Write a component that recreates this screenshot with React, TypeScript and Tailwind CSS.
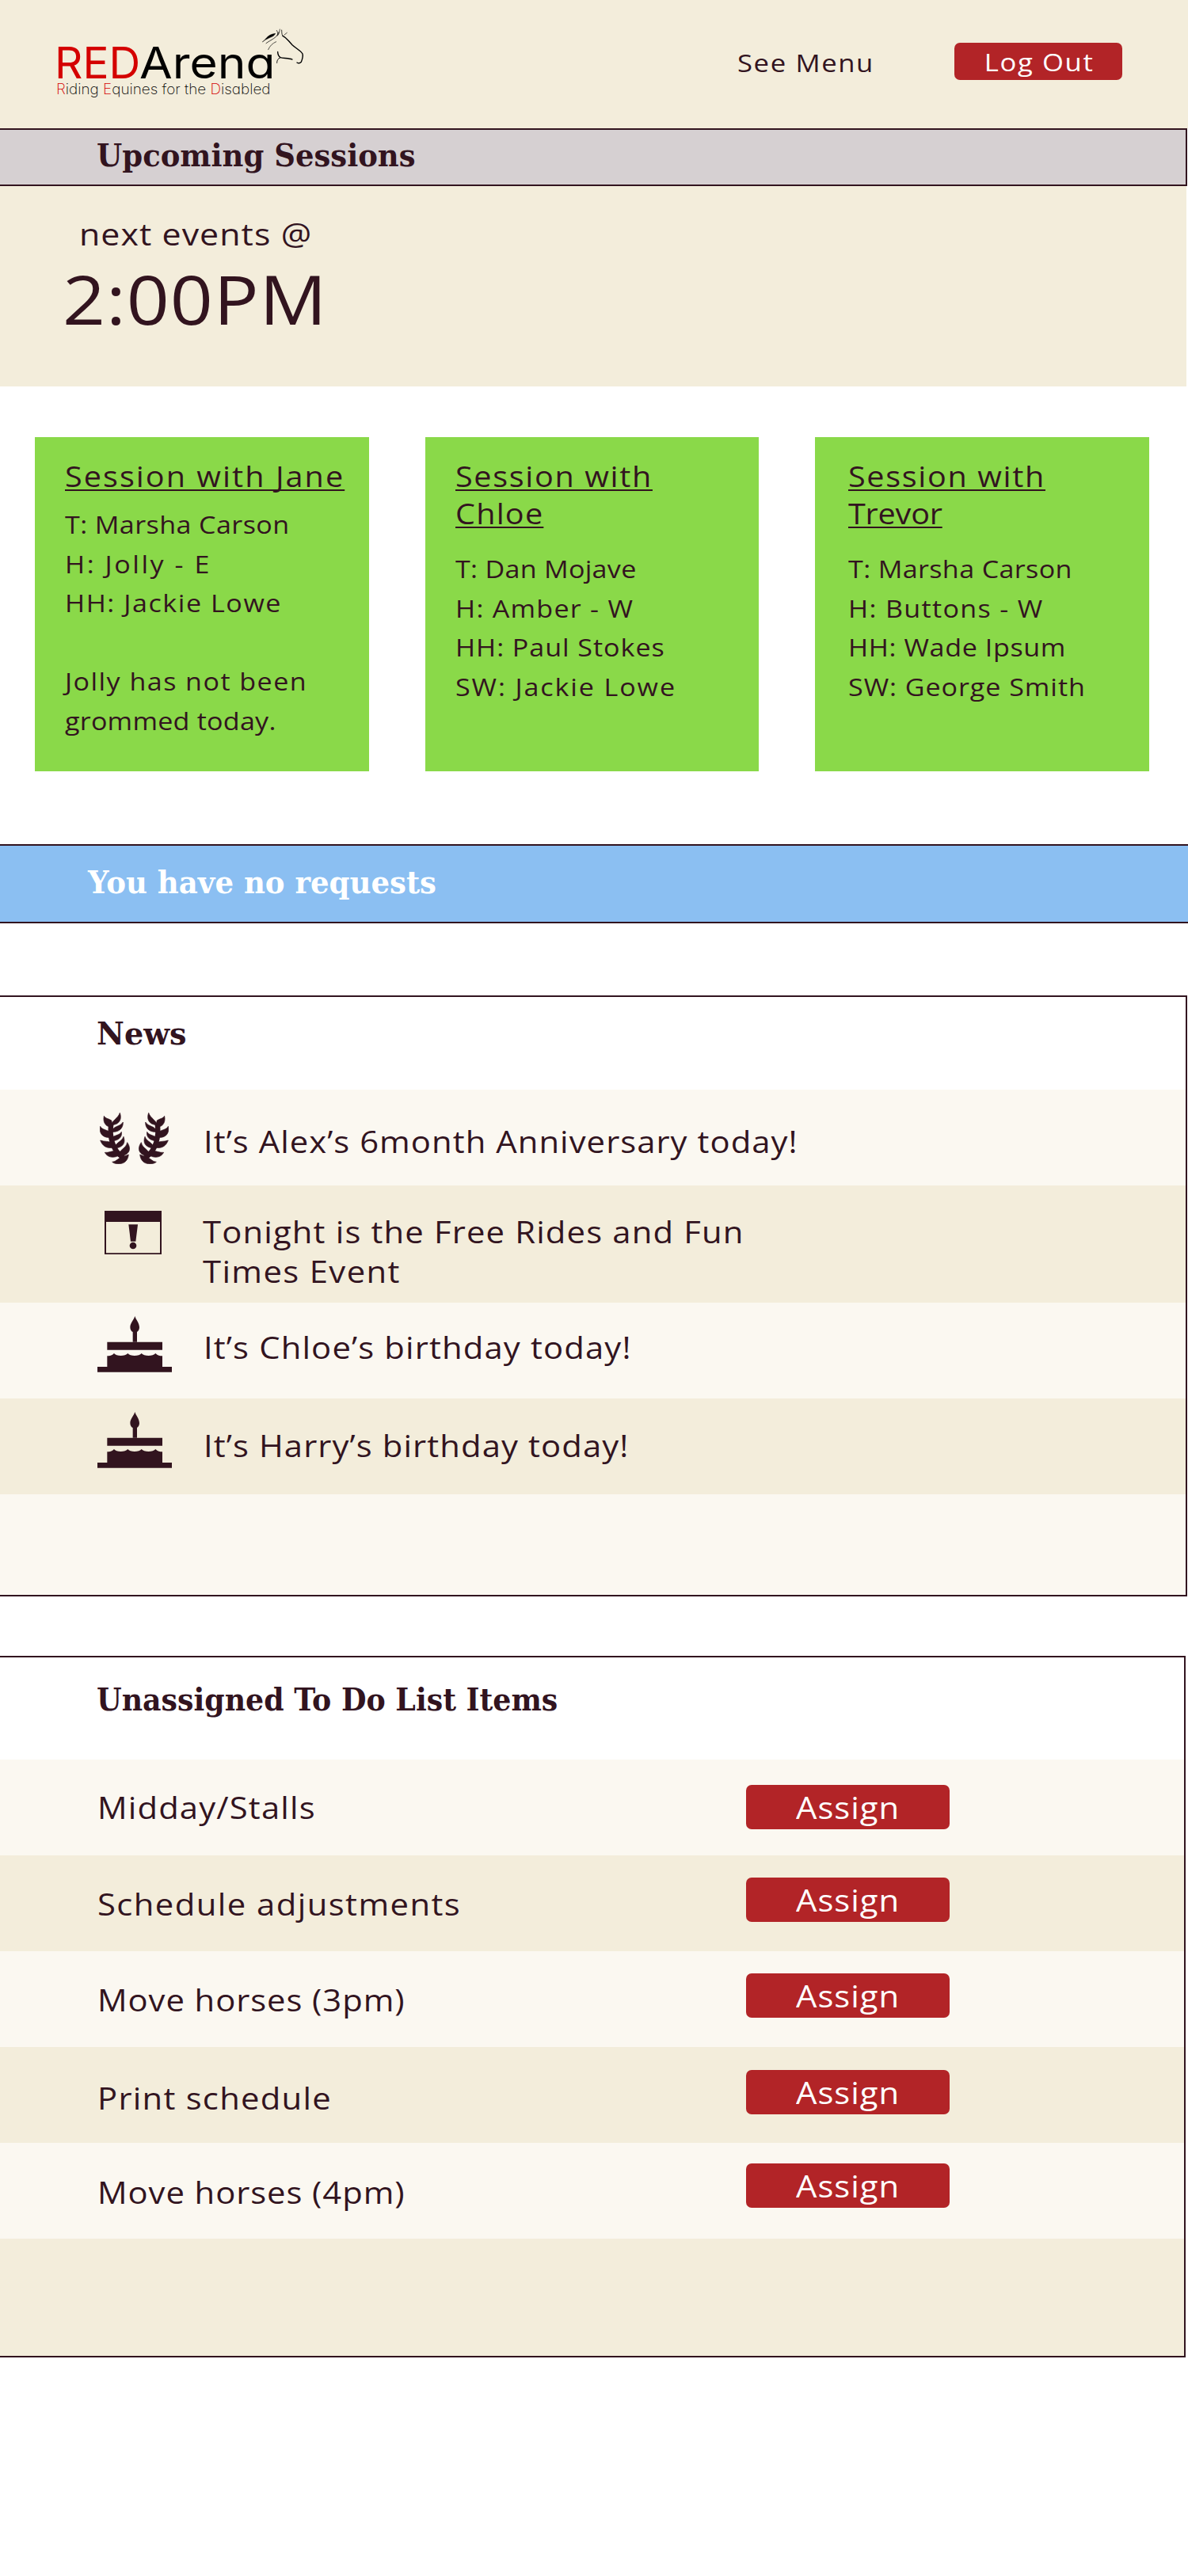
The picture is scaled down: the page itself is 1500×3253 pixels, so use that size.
import type { ReactNode } from "react";

/** Widened body text that keeps a single line. */
function Body({ className = "", children }: { className?: string; children: ReactNode }) {
  return (
    <span className={`block w-fit origin-left scale-x-110 whitespace-nowrap ${className}`}>{children}</span>
  );
}

function Heading({ className = "", children }: { className?: string; children: ReactNode }) {
  return (
    <h2
      className={`w-fit origin-left whitespace-nowrap font-['DejaVu_Serif',serif] text-[40px] font-bold leading-[40px] ${className}`}
    >
      {children}
    </h2>
  );
}

function HorseHead() {
  return (
    <svg
      viewBox="840 45 165 140"
      className="absolute left-[330px] top-[35px] h-[46.7px] w-[55px]"
      fill="none"
      stroke="#000"
      strokeWidth="3"
      strokeLinecap="round"
    >
      <path d="M845 98C855 94 862 70 893 67C886 82 868 80 845 98Z" fill="#000" strokeWidth="1.5" />
      <path d="M858 104C876 90 900 84 906 62" strokeWidth="2.2" />
      <path d="M866 128C872 114 882 104 896 98" strokeWidth="2" />
      <path d="M898 55C903 62 903 69 900 76" strokeWidth="2" />
      <path d="M910 51C909 60 907 66 904 72" strokeWidth="2" />
      <path d="M917 54C918 62 916 69 921 76" strokeWidth="2.4" />
      <path d="M937 64L927 72" strokeWidth="2" />
      <path d="M921 76C935 82 942 95 957 110C972 124 990 132 996 144C999 154 995 165 991 175C986 180 980 180 975 177" strokeWidth="4.2" />
      <path d="M902 136C902 148 906 154 912 158C925 161 945 160 957 165" strokeWidth="4" />
      <path d="M912 158C902 162 899 170 899 178" strokeWidth="3" />
    </svg>
  );
}

function Logo() {
  return (
    <div className="w-[930.5px] pl-[69px] pt-[59px] font-['Inter',sans-serif] [font-feature-settings:'cv11'_1]">
      <HorseHead />
      <div className="flex text-[55px] font-normal leading-[40px]">
        <span className="w-[107px] text-[#d40000]">RED</span>
        <span className="origin-left scale-x-[1.1] text-black">Arena</span>
      </div>
      <p className="ml-[2px] mt-[4px] w-fit origin-left scale-x-[1.05] whitespace-nowrap text-[18px] font-extralight leading-[20px] text-black">
        <span className="text-[#d40000]">R</span>iding <span className="text-[#d40000]">E</span>quines for the{" "}
        <span className="text-[#d40000]">D</span>isabled
      </p>
    </div>
  );
}

function Branch() {
  return (
    <g stroke="#32141f" strokeWidth="2">
      <path d="M122 112C112 165 127 222 168 246" fill="none" strokeWidth="19" />
      <path d="M94 88C98 98 115 98 123 106L124 130C104 131 88 115 94 88Z" />
      <path d="M154 76C162 97 155 120 124 122C122 105 147 98 154 76Z" />
      <path d="M166 111C167 134 152 150 122 148C128 124 155 130 166 111Z" />
      <path d="M80 127C85 140 107 140 118 150L122 168C95 174 73 158 80 127Z" />
      <path d="M160 148C164 170 146 184 118 182C122 158 150 166 160 148Z" />
      <path d="M80 180C95 186 112 182 128 190L132 206C106 214 88 202 80 180Z" />
      <path d="M168 166C177 190 166 208 134 210C138 186 160 188 168 166Z" />
      <path d="M97 226C112 228 125 219 142 220L150 238C130 248 108 246 97 226Z" />
      <path d="M182 188C199 212 192 238 150 240C148 215 178 212 182 188Z" />
      <path d="M125 262C140 262 148 246 162 244L187 234C184 262 165 270 148 269C138 269 130 267 125 262Z" />
    </g>
  );
}

function WreathIcon() {
  return (
    <svg viewBox="78 75 261 195" className="ml-[126px] mt-[29px] h-[65px] w-[87px]" fill="#32141f">
      <Branch />
      <g transform="translate(417 0) scale(-1 1)">
        <Branch />
      </g>
    </svg>
  );
}

function EventIcon() {
  return (
    <svg viewBox="96 447 216 166" className="ml-[132px] mt-[32px] h-[55.4px] w-[72px]" fill="#32141f">
      <path d="M96 447H312V613H96ZM102 489V607H306V489Z" fillRule="evenodd" />
      <path d="M187 499H222L214 563H195Z" />
      <circle cx="204" cy="579" r="13" />
    </svg>
  );
}

function CakeIcon() {
  return (
    <svg viewBox="69 845 282 212" className="ml-[123px] mt-[17px] h-[70.7px] w-[94px]" fill="#32141f">
      <path d="M211 845C214 858 228 870 228 888C228 896 224 902 219 905V943H203V905C197 902 193 896 193 886C194 870 208 858 211 845Z" />
      <path d="M106 943H315V973H106Z" />
      <path d="M106 1037V996C115 996 125 994 132 986C140 998 175 998 184 986C192 998 228 998 236 986C245 998 280 998 289 986C297 994 306 996 315 996V1037H351V1057H69V1037Z" />
    </svg>
  );
}

type Line = { text: string; tracking: string };

const cards: { pad: string; gap: string; title: Line[]; lines: Line[] }[] = [
  {
    pad: "pl-[38px]",
    gap: "mt-[13px]",
    title: [{ text: "Session with Jane", tracking: "tracking-[1.85px]" }],
    lines: [
      { text: "T: Marsha Carson", tracking: "tracking-[0.36px]" },
      { text: "H: Jolly - E", tracking: "tracking-[2.3px]" },
      { text: "HH: Jackie Lowe", tracking: "tracking-[1.4px]" },
      { text: "\u00a0", tracking: "" },
      { text: "Jolly has not been", tracking: "tracking-[1.3px]" },
      { text: "grommed today.", tracking: "tracking-[0.2px]" },
    ],
  },
  {
    pad: "pl-[38.5px]",
    gap: "mt-[22px]",
    title: [
      { text: "Session with", tracking: "tracking-[1.5px]" },
      { text: "Chloe", tracking: "tracking-[1.1px]" },
    ],
    lines: [
      { text: "T: Dan Mojave", tracking: "tracking-[0.25px]" },
      { text: "H: Amber - W", tracking: "tracking-[1.13px]" },
      { text: "HH: Paul Stokes", tracking: "tracking-[0.85px]" },
      { text: "SW: Jackie Lowe", tracking: "tracking-[1.7px]" },
    ],
  },
  {
    pad: "pl-[41.5px]",
    gap: "mt-[22px]",
    title: [
      { text: "Session with", tracking: "tracking-[1.5px]" },
      { text: "Trevor", tracking: "tracking-[-0.2px]" },
    ],
    lines: [
      { text: "T: Marsha Carson", tracking: "tracking-[0.32px]" },
      { text: "H: Buttons - W", tracking: "tracking-[1.2px]" },
      { text: "HH: Wade Ipsum", tracking: "tracking-[0.55px]" },
      { text: "SW: George Smith", tracking: "tracking-[0.85px]" },
    ],
  },
];

const news: { icon: ReactNode; row: string; pad: string; lines: Line[] }[] = [
  {
    icon: <WreathIcon />,
    row: "h-[121px] bg-[#fbf8f1]",
    pad: "pt-[40px]",
    lines: [{ text: "It’s Alex’s 6month Anniversary today!", tracking: "tracking-[0.95px]" }],
  },
  {
    icon: <EventIcon />,
    row: "h-[148px] bg-[#f3eddb]",
    pad: "-ml-[1px] pt-[33px]",
    lines: [
      { text: "Tonight is the Free Rides and Fun", tracking: "tracking-[1.05px]" },
      { text: "Times Event", tracking: "tracking-[1.25px]" },
    ],
  },
  {
    icon: <CakeIcon />,
    row: "h-[121px] bg-[#fbf8f1]",
    pad: "pt-[31px]",
    lines: [{ text: "It’s Chloe’s birthday today!", tracking: "tracking-[1.04px]" }],
  },
  {
    icon: <CakeIcon />,
    row: "h-[121px] bg-[#f3eddb]",
    pad: "pt-[34px]",
    lines: [{ text: "It’s Harry’s birthday today!", tracking: "tracking-[1px]" }],
  },
];

const todos = [
  { text: "Midday/Stalls", tracking: "tracking-[1.04px]", row: "bg-[#fbf8f1]", pad: "pt-[35px]", button: "mt-[32px]" },
  { text: "Schedule adjustments", tracking: "tracking-[1.3px]", row: "bg-[#f3eddb]", pad: "pt-[36px]", button: "mt-[28px]" },
  { text: "Move horses (3pm)", tracking: "tracking-[0.84px]", row: "bg-[#fbf8f1]", pad: "pt-[36px]", button: "mt-[28px]" },
  { text: "Print schedule", tracking: "tracking-[1.14px]", row: "bg-[#f3eddb]", pad: "pt-[39px]", button: "mt-[29px]" },
  { text: "Move horses (4pm)", tracking: "tracking-[0.84px]", row: "bg-[#fbf8f1]", pad: "pt-[37px]", button: "mt-[26px]" },
];

export default function App() {
  return (
    <div className="relative h-[3253px] w-[1500px] overflow-hidden bg-white font-['Open_Sans',sans-serif] text-[#32141f]">
      <header className="flex h-[162px] bg-[#f3eddb] text-[31.5px]">
        <Logo />
        <nav className="w-[274px] pt-[59px] leading-[40px]">
          <Body className="tracking-[1.47px]">See Menu</Body>
        </nav>
        <button className="mt-[54px] h-[47px] w-[212px] rounded-[7px] bg-[#b22427] leading-[47px] text-white">
          <span className="inline-block scale-x-110 pl-[2px] tracking-[1.46px]">Log Out</span>
        </button>
      </header>

      <div className="h-[73px] w-[1499px] border-y-2 border-r-2 border-[#32141f] bg-[#d6d0d2] pl-[122px] pt-[12px]">
        <Heading className="scale-x-[0.925]">Upcoming Sessions</Heading>
      </div>

      <section className="h-[253px] w-[1498px] bg-[#f3eddb] pt-[40px]">
        <Body className="ml-[100px] text-[39px] leading-[40px] tracking-[0.95px]">next events @</Body>
        <Body className="ml-[79px] mt-[21.5px] text-[86px] leading-[80px] tracking-[0.8px]">2:00PM</Body>
      </section>

      <section className="flex gap-[71px] pl-[44px] pt-[64px]">
        {cards.map((card, i) => (
          <article key={i} className={`h-[421.5px] w-[421.5px] bg-[#8ad949] pt-[26px] ${card.pad}`}>
            <h3 className="text-[36px] leading-[47px]">
              {card.title.map((line) => (
                <Body
                  key={line.text}
                  className={`underline decoration-2 underline-offset-[3px] [text-decoration-skip-ink:none] ${line.tracking}`}
                >
                  {line.text}
                </Body>
              ))}
            </h3>
            <div className={`text-[31px] leading-[49.6px] ${card.gap}`}>
              {card.lines.map((line) => (
                <Body key={line.text} className={line.tracking}>
                  {line.text}
                </Body>
              ))}
            </div>
          </article>
        ))}
      </section>

      <section className="mt-[92.5px] h-[100px] border-y-2 border-[#32141f] bg-[#8bbff2] pl-[111px] pt-[26px] text-white">
        <Heading className="scale-x-[0.927]">You have no requests</Heading>
      </section>

      <section className="mt-[91px] w-[1499px] border-y-2 border-r-2 border-[#32141f]">
        <div className="h-[117px] pl-[122px] pt-[26px]">
          <Heading className="scale-x-[0.954]">News</Heading>
        </div>
        {news.map((item, i) => (
          <div key={i} className={`flex ${item.row}`}>
            <div className="w-[257px]">{item.icon}</div>
            <div className={`text-[38px] leading-[50px] ${item.pad}`}>
              {item.lines.map((line) => (
                <Body key={line.text} className={line.tracking}>
                  {line.text}
                </Body>
              ))}
            </div>
          </div>
        ))}
        <div className="h-[127px] bg-[#fbf8f1]" />
      </section>

      <section className="mt-[75px] w-[1497px] border-y-2 border-r-2 border-[#32141f]">
        <div className="h-[129px] pl-[122px] pt-[33px]">
          <Heading className="scale-x-[0.908]">Unassigned To Do List Items</Heading>
        </div>
        {todos.map((todo) => (
          <div key={todo.text} className={`flex h-[121px] text-[38px] ${todo.row}`}>
            <div className={`w-[942px] pl-[123px] leading-[50px] ${todo.pad}`}>
              <Body className={todo.tracking}>{todo.text}</Body>
            </div>
            <button
              className={`h-[56px] w-[257px] rounded-[7px] bg-[#b22427] leading-[56px] text-white ${todo.button}`}
            >
              <span className="inline-block scale-x-110 tracking-[0.88px]">Assign</span>
            </button>
          </div>
        ))}
        <div className="h-[148px] bg-[#f3eddb]" />
      </section>
    </div>
  );
}
